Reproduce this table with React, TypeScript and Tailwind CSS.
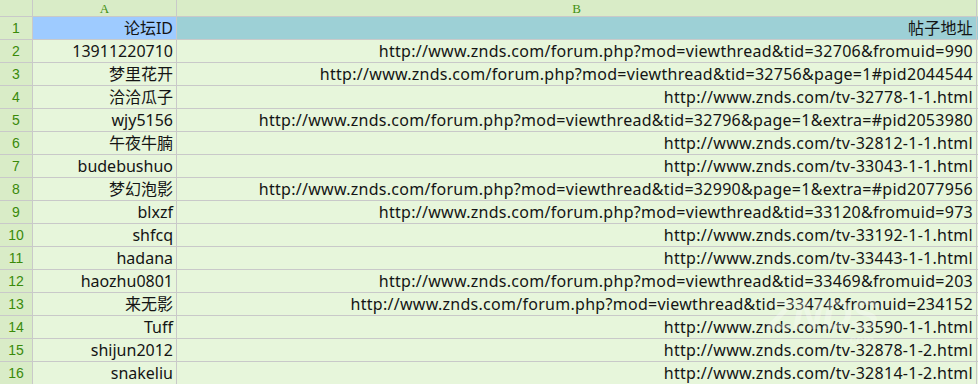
const rows: [string, string][] = [
  ['论坛ID', '帖子地址'],
  ['13911220710', 'http://www.znds.com/forum.php?mod=viewthread&tid=32706&fromuid=990'],
  ['梦里花开', 'http://www.znds.com/forum.php?mod=viewthread&tid=32756&page=1#pid2044544'],
  ['洽洽瓜子', 'http://www.znds.com/tv-32778-1-1.html'],
  ['wjy5156', 'http://www.znds.com/forum.php?mod=viewthread&tid=32796&page=1&extra=#pid2053980'],
  ['午夜牛腩', 'http://www.znds.com/tv-32812-1-1.html'],
  ['budebushuo', 'http://www.znds.com/tv-33043-1-1.html'],
  ['梦幻泡影', 'http://www.znds.com/forum.php?mod=viewthread&tid=32990&page=1&extra=#pid2077956'],
  ['blxzf', 'http://www.znds.com/forum.php?mod=viewthread&tid=33120&fromuid=973'],
  ['shfcq', 'http://www.znds.com/tv-33192-1-1.html'],
  ['hadana', 'http://www.znds.com/tv-33443-1-1.html'],
  ['haozhu0801', 'http://www.znds.com/forum.php?mod=viewthread&tid=33469&fromuid=203'],
  ['来无影', 'http://www.znds.com/forum.php?mod=viewthread&tid=33474&fromuid=234152'],
  ['Tuff', 'http://www.znds.com/tv-33590-1-1.html'],
  ['shijun2012', 'http://www.znds.com/tv-32878-1-2.html'],
  ['snakeliu', 'http://www.znds.com/tv-32814-1-2.html'],
]

const cellFont = { fontFamily: '"Noto Sans", "Noto Sans CJK SC", sans-serif' }

export default function App() {
  return (
    <div className="relative w-[978px] h-[384px] overflow-hidden bg-[#c9c9c9]">
      <div className="grid grid-cols-[32px_143px_799px_1px] grid-rows-[16px_repeat(16,22px)] gap-px">
        {/* column headers */}
        <div className="bg-[#d9ecc7]" />
        <div className="bg-[#d9ecc7] flex items-center justify-center text-[13px] leading-none text-[#3f8f10] font-['Liberation_Serif',serif]">A</div>
        <div className="bg-[#d9ecc7] flex items-center justify-center text-[13px] leading-none text-[#3f8f10] font-['Liberation_Serif',serif]">B</div>
        <div className="bg-[#d9ecc7]" />

        {rows.map(([id, url], i) => (
          <Row key={i} n={i + 1} id={id} url={url} head={i === 0} />
        ))}
      </div>

      {/* faint site watermark over the sheet */}
      <div className="absolute left-[768px] top-[294px] pointer-events-none select-none flex flex-col items-end text-white/30 font-['Liberation_Sans',sans-serif]">
        <span className="text-[42px] font-bold italic leading-none tracking-tight">ZNDS</span>
        <span className="text-[12px] font-bold leading-none -mt-0.5 mr-1">.com</span>
      </div>
    </div>
  )
}

function Row({ n, id, url, head }: { n: number; id: string; url: string; head: boolean }) {
  return (
    <>
      <div className="bg-[#d9ecc7] flex items-center justify-center text-[14px] leading-none text-[#3a8a0a] font-['Liberation_Sans',sans-serif]">
        {n}
      </div>
      <div
        style={cellFont}
        className={`${head ? 'bg-[#9ecbff]' : 'bg-[#e7f6db]'} flex items-center justify-end pr-[3px] text-[16px] leading-[22px] text-[#141414] whitespace-nowrap overflow-hidden`}
      >
        {id}
      </div>
      <div
        style={cellFont}
        className={`${head ? 'bg-[#9dd0d6]' : 'bg-[#e7f6db]'} flex items-center justify-end pr-[3px] text-[16px] tracking-[0.28px] leading-[22px] text-[#141414] whitespace-nowrap overflow-hidden`}
      >
        {url}
      </div>
      <div className={head ? 'bg-[#9dd0d6]' : 'bg-[#e7f6db]'} />
    </>
  )
}
